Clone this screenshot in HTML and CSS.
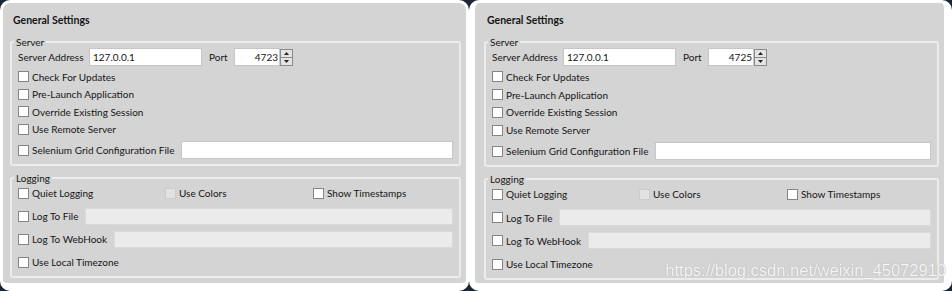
FILE: index.html
```html
<!DOCTYPE html>
<html lang="en">
<head>
    <meta charset="UTF-8">
    <meta name="viewport" content="width=device-width, initial-scale=1.0">
    <title>Appium Desktop - General Settings</title>
    <link rel="stylesheet" href="styles.css">
</head>
<body>

    <div class="screens">

        <!-- Left settings window -->
        <div class="panel panel-left">
            <div class="panel-title">General Settings</div>

            <!-- Server group -->
            <fieldset class="group group-server">
                <legend>Server</legend>
                <div class="row address-row">
                    <span class="address-label">Server Address</span>
                    <input class="field address-field" type="text" value="127.0.0.1">
                    <span class="port-label">Port</span>
                    <div class="spin-box">
                        <input class="field port-field" type="text" value="4723">
                        <svg class="spin" width="13" height="17" viewBox="0 0 13 17">
                            <rect x="0.5" y="0.5" width="12" height="8" fill="#e4e4e4" stroke="#8a8a8a"/>
                            <rect x="0.5" y="8.5" width="12" height="8" fill="#e4e4e4" stroke="#8a8a8a"/>
                            <path d="M4 6 L6.5 3 L9 6 Z" fill="#222"/>
                            <path d="M4 11 L6.5 14 L9 11 Z" fill="#222"/>
                        </svg>
                    </div>
                </div>
                <label class="check-row"><input type="checkbox">Check For Updates</label>
                <label class="check-row"><input type="checkbox">Pre-Launch Application</label>
                <label class="check-row"><input type="checkbox">Override Existing Session</label>
                <label class="check-row"><input type="checkbox">Use Remote Server</label>
                <div class="row selenium-row">
                    <label class="check"><input type="checkbox">Selenium Grid Configuration File</label>
                    <input class="field grow" type="text">
                </div>
            </fieldset>

            <!-- Logging group -->
            <fieldset class="group group-logging">
                <legend>Logging</legend>
                <div class="row log-options">
                    <label class="check"><input type="checkbox">Quiet Logging</label>
                    <label class="check"><input type="checkbox" disabled>Use Colors</label>
                    <label class="check"><input type="checkbox">Show Timestamps</label>
                </div>
                <div class="row">
                    <label class="check"><input type="checkbox">Log To File</label>
                    <input class="field grow" type="text" disabled>
                </div>
                <div class="row">
                    <label class="check"><input type="checkbox">Log To WebHook</label>
                    <input class="field grow" type="text" disabled>
                </div>
                <label class="row check"><input type="checkbox">Use Local Timezone</label>
            </fieldset>
        </div>

        <!-- Right settings window -->
        <div class="panel panel-right">
            <div class="panel-title">General Settings</div>

            <fieldset class="group group-server">
                <legend>Server</legend>
                <div class="row address-row">
                    <span class="address-label">Server Address</span>
                    <input class="field address-field" type="text" value="127.0.0.1">
                    <span class="port-label">Port</span>
                    <div class="spin-box">
                        <input class="field port-field" type="text" value="4725">
                        <svg class="spin" width="13" height="17" viewBox="0 0 13 17">
                            <rect x="0.5" y="0.5" width="12" height="8" fill="#e4e4e4" stroke="#8a8a8a"/>
                            <rect x="0.5" y="8.5" width="12" height="8" fill="#e4e4e4" stroke="#8a8a8a"/>
                            <path d="M4 6 L6.5 3 L9 6 Z" fill="#222"/>
                            <path d="M4 11 L6.5 14 L9 11 Z" fill="#222"/>
                        </svg>
                    </div>
                </div>
                <label class="check-row"><input type="checkbox">Check For Updates</label>
                <label class="check-row"><input type="checkbox">Pre-Launch Application</label>
                <label class="check-row"><input type="checkbox">Override Existing Session</label>
                <label class="check-row"><input type="checkbox">Use Remote Server</label>
                <div class="row selenium-row">
                    <label class="check"><input type="checkbox">Selenium Grid Configuration File</label>
                    <input class="field grow" type="text">
                </div>
            </fieldset>

            <fieldset class="group group-logging">
                <legend>Logging</legend>
                <div class="row log-options">
                    <label class="check"><input type="checkbox">Quiet Logging</label>
                    <label class="check"><input type="checkbox" disabled>Use Colors</label>
                    <label class="check"><input type="checkbox">Show Timestamps</label>
                </div>
                <div class="row">
                    <label class="check"><input type="checkbox">Log To File</label>
                    <input class="field grow" type="text" disabled>
                </div>
                <div class="row">
                    <label class="check"><input type="checkbox">Log To WebHook</label>
                    <input class="field grow" type="text" disabled>
                </div>
                <label class="row check"><input type="checkbox">Use Local Timezone</label>
            </fieldset>
        </div>

        <!-- Blog watermark over the screenshot -->
        <div class="watermark">https://blog.csdn.net/weixin_45072910</div>
    </div>

</body>
</html>
```

FILE: styles.css
```css
/* General Styles */
* {
    box-sizing: border-box;
}

body {
    margin: 0;
    background-color: #1c2633;
    font-family: Lato, 'Noto Sans', sans-serif;
    font-size: 10px;
    color: #151515;
}

.screens {
    position: relative;
    display: flex;
    height: 291px;
}

/* Window panels */
.panel {
    height: 291px;
    background-color: #d4d4d4;
    border: 3px solid #fff;
    border-bottom-width: 8px;
    border-radius: 10px;
    padding: 9px 5px 0 7px;
}

.panel-left {
    width: 469px;
}

.panel-right {
    flex: 1;
    border-left-width: 6px;
    border-right-width: 8px;
    padding-left: 9px;
}

.panel-title {
    font-size: 10.5px;
    font-weight: 700;
    line-height: 16px;
    padding-left: 3px;
    margin-bottom: 8px;
}

/* Group boxes */
.group {
    margin: 0;
    min-width: 0;
    border: 2px solid #ececec;
    border-radius: 3px;
    padding: 0 6px 5px 6px;
}

.group legend {
    line-height: 12px;
    padding: 0 2px;
    margin-left: -4px;
}

.group-logging {
    margin-top: 6px;
}

/* Rows */
.row {
    display: flex;
    align-items: center;
    height: 18px;
    white-space: nowrap;
}

.address-row {
    margin-bottom: 2px;
}

.check-row,
.check {
    display: flex;
    align-items: center;
    white-space: nowrap;
    flex: none;
}

.check-row {
    height: 17.5px;
}

/* the right screenshot is scaled up a touch */
.panel-right .check-row {
    height: 17.8px;
}

.panel-right .group-logging .row + .row {
    margin-top: 5.4px;
}

.selenium-row {
    margin-top: 3px;
}

.group-logging .row + .row {
    margin-top: 5px;
}

.log-options {
    display: grid;
    grid-template-columns: 147px 148px auto;
}

/* Checkboxes */
input[type="checkbox"] {
    appearance: none;
    -webkit-appearance: none;
    width: 11px;
    height: 11px;
    margin: 0 3px 0 0;
    background-color: #fff;
    border: 1px solid #858585;
    flex: none;
}

input[type="checkbox"]:disabled {
    background-color: #e2e2e2;
    border-color: #cdcdcd;
}

/* Text fields */
.field {
    height: 18px;
    font: inherit;
    color: #151515;
    background-color: #fff;
    border: 1px solid #c6c6c6;
    padding: 0 3px;
    outline: none;
}

.field:disabled {
    height: 17px;
    background-color: #ebebeb;
    border-color: #dadada;
}

.grow {
    flex: 1;
    min-width: 0;
    margin-left: 7px;
}

.address-label {
    width: 71px;
    flex: none;
}

.address-field {
    width: 113px;
    flex: none;
}

.port-label {
    width: 32px;
    padding-left: 7px;
    flex: none;
}

.spin-box {
    display: flex;
    align-items: center;
}

.port-field {
    width: 46px;
    text-align: right;
    padding-right: 1px;
}

.spin {
    display: block;
}

/* Watermark */
.watermark {
    position: absolute;
    right: 6px;
    bottom: 11px;
    font-family: 'Liberation Sans', Arial, sans-serif;
    font-size: 16.5px;
    color: #f6f6f6;
    text-shadow: 0 0 1px #9a9a9a;
}
```
